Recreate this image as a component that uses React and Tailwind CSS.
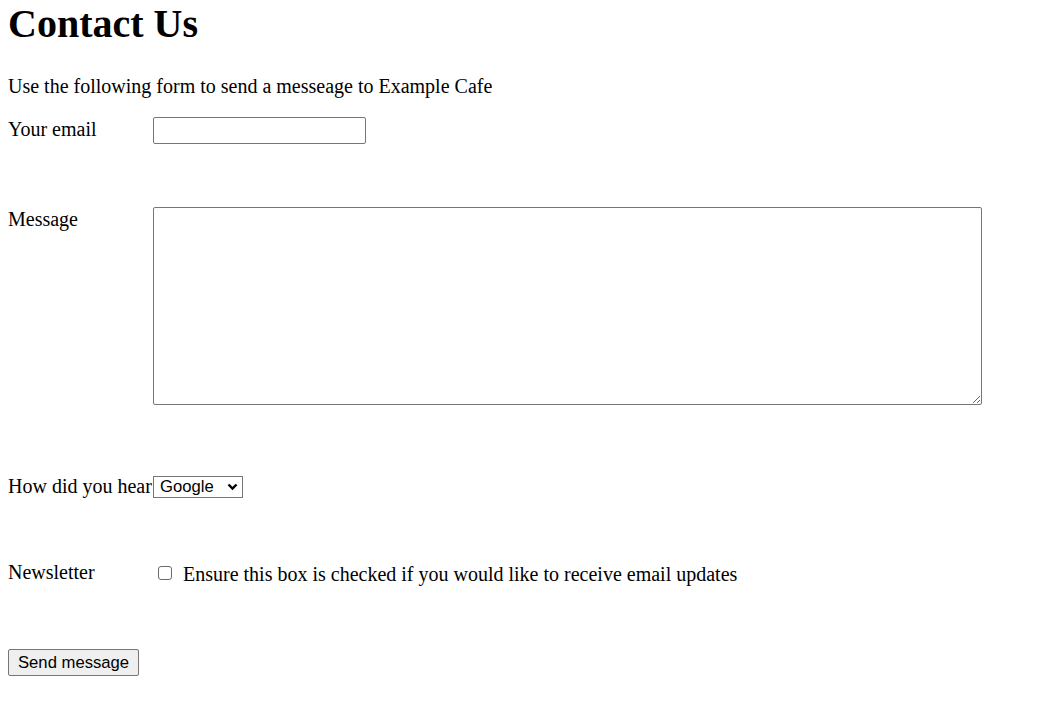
import React, { useState } from 'react'

function Row({ label, children, className = '', align = 'items-start', labelClass = '' }) {
  return (
    <div className={`flex ${align} ${className}`}>
      <label className={`w-[145px] shrink-0 leading-[23px] whitespace-nowrap ${labelClass}`}>{label}</label>
      {children}
    </div>
  )
}

export default function App() {
  const [email, setEmail] = useState('')
  const [message, setMessage] = useState('')
  const [source, setSource] = useState('google')
  const [newsletter, setNewsletter] = useState(false)

  return (
    <div className="min-h-screen bg-white px-[8px] text-black text-[20px] font-['Liberation_Serif',_'Times_New_Roman',_serif]">
      <h1 className="m-0 text-[40px] font-bold leading-[46px] mt-[1px]">Contact Us</h1>
      <p className="mt-[28px] leading-[23px]">Use the following form to send a messeage to Example Cafe</p>

      <form onSubmit={e => e.preventDefault()} className="flex flex-col">
        <Row label="Your email" className="mt-[19px]" labelClass="mt-[1px]">
          <input
            type="email"
            value={email}
            onChange={e => setEmail(e.target.value)}
            className="block w-[213px] h-[27px] border border-[#767676] rounded-[2px] px-[3px] text-[16.67px] font-['Liberation_Sans',_Arial,_sans-serif] bg-white"
          />
        </Row>

        <Row label="Message" className="mt-[63px]" labelClass="mt-[1px]">
          <textarea
            value={message}
            onChange={e => setMessage(e.target.value)}
            className="block w-[829px] h-[198px] border border-[#767676] rounded-[2px] p-[3px] text-[16.67px] font-['Liberation_Mono',_monospace] bg-white"
          />
        </Row>

        <Row label="How did you hear" className="mt-[70px]" align="items-center">
          <div className="relative w-[90px] h-[22px]">
            <select
              value={source}
              onChange={e => setSource(e.target.value)}
              className="block appearance-none w-full h-full border border-[#767676] rounded-[0px] pl-[6px] pr-[20px] text-[16.67px] leading-[20px] font-['Liberation_Sans',_Arial,_sans-serif] bg-white"
            >
              <option value="google">Google</option>
              <option value="friend">Friend</option>
              <option value="other">Other</option>
            </select>
            <svg className="pointer-events-none absolute right-[5px] top-[7px]" width="11" height="8" viewBox="0 0 11 8">
              <path d="M1.5 1.5 L5.5 5.5 L9.5 1.5" fill="none" stroke="#000" strokeWidth="2.4" />
            </svg>
          </div>
        </Row>

        <Row label="Newsletter" className="mt-[63px]">
          <input
            type="checkbox"
            checked={newsletter}
            onChange={e => setNewsletter(e.target.checked)}
            className="block appearance-none shrink-0 ml-[5px] mt-[5px] w-[14px] h-[14px] border border-[#6b6b6b] rounded-[3px] bg-white checked:bg-[#0075ff] checked:border-[#0075ff]"
          />
          <span className="ml-[11px] mt-[2px] leading-[23px]">Ensure this box is checked if you would like to receive email updates</span>
        </Row>

        <div className="mt-[63px]">
          <button
            type="submit"
            className="block h-[27px] px-[9px] border border-[#767676] rounded-[2px] bg-[#efefef] text-[16.67px] leading-[20px] font-['Liberation_Sans',_Arial,_sans-serif]"
          >
            Send message
          </button>
        </div>
      </form>
    </div>
  )
}
